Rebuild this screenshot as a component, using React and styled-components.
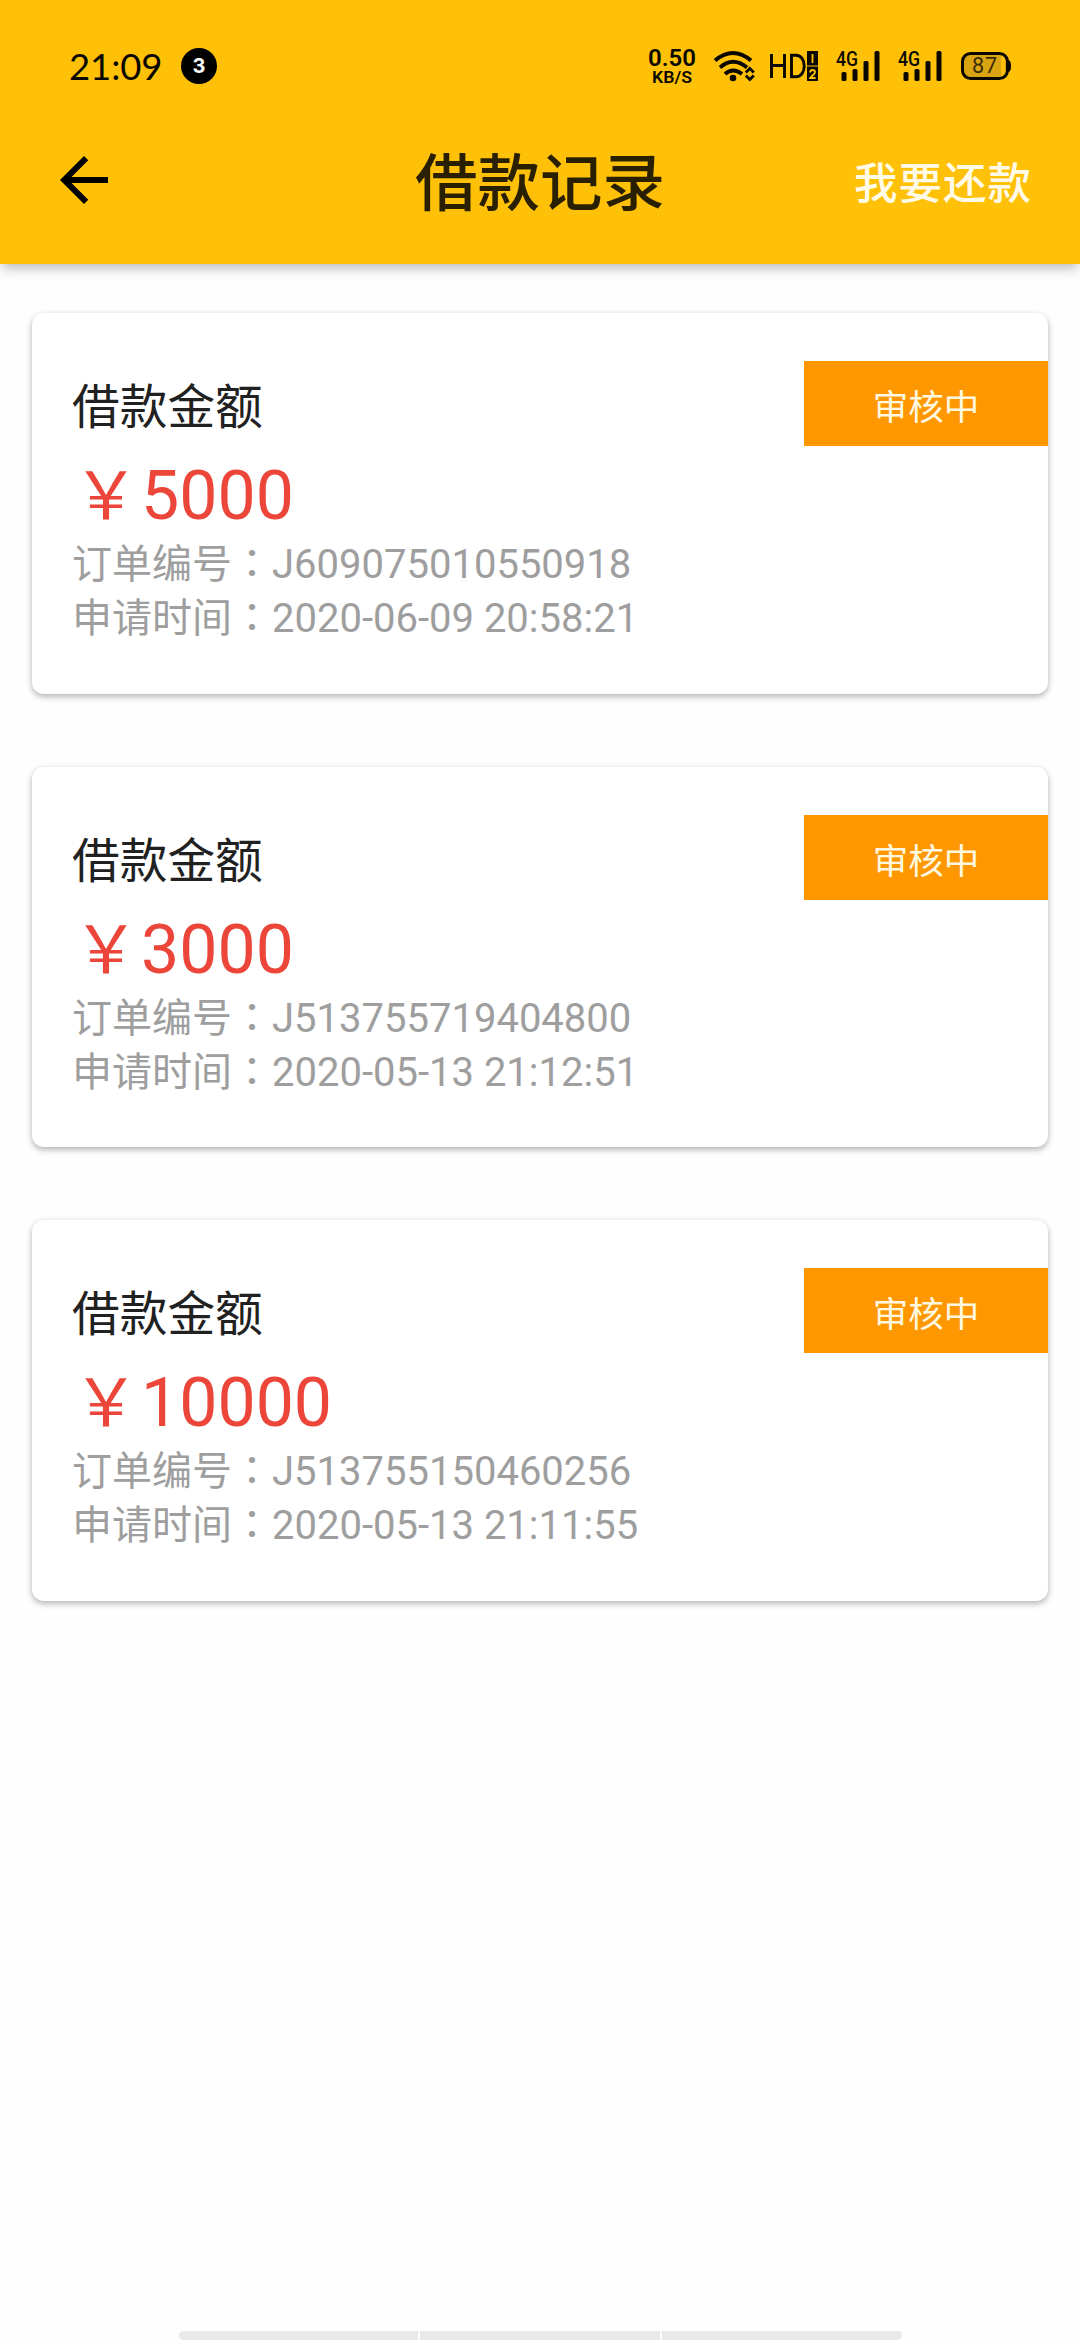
import React from 'react';
import styled, { createGlobalStyle } from 'styled-components';

const GlobalStyle = createGlobalStyle`
  * { box-sizing: border-box; }
  body {
    margin: 0;
    background: #fefefe;
    font-family: Roboto, "Noto Sans CJK SC", sans-serif;
  }
`;

const Screen = styled.div`
  display: flex;
  flex-direction: column;
  width: 1080px;
  height: 2340px;
  overflow: hidden;
`;

const Header = styled.header`
  flex: none;
  height: 264px;
  background: #ffc107;
  box-shadow: 0 6px 12px -2px rgba(0, 0, 0, 0.28);
`;

const StatusBar = styled.div`
  display: flex;
  align-items: center;
  justify-content: space-between;
  height: 96px;
  padding: 36px 68px 0 69px;
`;

const StatusGroup = styled.div`
  display: flex;
  align-items: center;
  height: 60px;
`;

const Clock = styled.span`
  width: 112px;
  font: 400 36.5px/60px Lato, sans-serif;
  letter-spacing: -0.1px;
  color: #0a0800;
`;

const Count = styled.span`
  display: flex;
  align-items: center;
  justify-content: center;
  width: 36px;
  height: 36px;
  border-radius: 50%;
  background: #000;
  color: #fff;
  font: 700 20px/36px Inter, sans-serif;
`;

const StatusIcons = styled.svg`
  display: block;
  width: 370px;
  height: 60px;
`;

const Toolbar = styled.div`
  display: grid;
  grid-template-columns: 1fr auto 1fr;
  align-items: center;
  height: 168px;
  padding: 0 48px;
`;

const Back = styled.svg`
  display: block;
  width: 72px;
  height: 72px;
`;

const Title = styled.h1`
  margin: 9px 0 0;
  font-size: 62.5px;
  font-weight: 500;
  line-height: 90px;
  color: #291f01;
`;

const Action = styled.span`
  justify-self: end;
  margin-top: 10px;
  font-size: 43.5px;
  letter-spacing: 1px;
  font-weight: 500;
  line-height: 60px;
  color: #fffbe6;
`;

const List = styled.main`
  flex: 1;
  display: flex;
  flex-direction: column;
  gap: 73px;
  padding: 49px 32px 0;
`;

const Card = styled.article`
  display: flex;
  justify-content: space-between;
  align-items: flex-start;
  height: 380.5px;
  padding: 48px 0 0 40px;
  border-radius: 12px;
  background: #fff;
  box-shadow: 0 3px 6px rgba(0, 0, 0, 0.24), 0 1px 6px rgba(0, 0, 0, 0.08);
`;

const Details = styled.div`
  display: flex;
  flex-direction: column;
`;

const Label = styled.div`
  margin-top: 11px;
  font-size: 47.7px;
  line-height: 72px;
  color: #212121;
`;

const Amount = styled.div`
  display: flex;
  height: 84px;
  margin-top: 10px;
  font-size: 68px;
  line-height: 84px;
  color: #ec463a;
`;

const Currency = styled.span`
  width: 69px;
  padding-right: 1px;
  font-size: 66px;
  line-height: 86px;
  text-align: center;
`;

const Meta = styled.div`
  font-size: 40px;
  line-height: 54px;
  color: #9e9e9e;
`;

const Colon = styled.span`
  font-family: "Noto Sans CJK TC", sans-serif;
  line-height: 1;
`;

const Badge = styled.span`
  width: 244px;
  height: 85px;
  padding-top: 3px;
  text-align: center;
  font-size: 35.5px;
  line-height: 88px;
  background: #ff9800;
  color: #fff8e0;
`;

const Dock = styled.footer`
  display: flex;
  gap: 2px;
  width: 723px;
  height: 9px;
  margin: 0 auto;
  border-radius: 6px;
  overflow: hidden;
`;

const DockPart = styled.div`
  flex: 1;
  background: #e9e9e9;
`;

const loans = [
  { amount: '5000', order: 'J609075010550918', time: '2020-06-09 20:58:21' },
  { amount: '3000', order: 'J513755719404800', time: '2020-05-13 21:12:51' },
  { amount: '10000', order: 'J513755150460256', time: '2020-05-13 21:11:55' },
];

function Signal({ x }) {
  return (
    <g transform={`translate(${x} 0)`}>
      <text x="0" y="30" fontFamily="Roboto" fontSize="20" fontWeight="500" textLength="22" lengthAdjust="spacingAndGlyphs">4G</text>
      <rect x="5.500" y="36" width="5" height="9" rx="1.500" />
      <rect x="16.500" y="33" width="5" height="12" rx="1.500" />
      <rect x="27.500" y="25" width="5" height="20" rx="1.500" />
      <rect x="38.500" y="15" width="5" height="30" rx="1.500" />
    </g>
  );
}

function DeviceStatus() {
  return (
    <StatusIcons viewBox="0 0 370 60" fill="#0a0800">
      <text x="6" y="30" fontFamily="Roboto" fontSize="23.500" fontWeight="600" textLength="48" lengthAdjust="spacingAndGlyphs">0.50</text>
      <text x="10" y="46.500" fontFamily="Roboto" fontSize="17" fontWeight="600" textLength="40" lengthAdjust="spacingAndGlyphs">KB/S</text>
      <g fill="none" stroke="#0a0800" strokeWidth="4">
        <path d="M73 24.500Q91 9.500 109 24.500" />
        <path d="M78 31.500Q91 20 105 31.500" />
        <path d="M83 38Q91 31 100 38" />
      </g>
      <circle cx="91" cy="42" r="3.300" />
      <path d="M103.800 36.500L107.800 32.500L111.800 36.500M103.800 39.500L107.800 43.500L111.800 39.500" fill="none" stroke="#0a0800" strokeWidth="2.800" />
      <path d="M129.500 18V42M129.500 29.500H142.500M142.500 18V42M149.500 19.300V40.700H154C165 40.700 165 19.300 154 19.300Z" fill="none" stroke="#0a0800" strokeWidth="2.900" />
      <rect x="165" y="15" width="11" height="14.500" />
      <rect x="165" y="30.500" width="11" height="14.500" />
      <path d="M170.500 18V27M168 36.500Q168.500 34 170.500 34Q173 34 173 36.300C173 38 169.500 40 168.300 42H173.500" fill="none" stroke="#ffc107" strokeWidth="1.800" />
      <Signal x={194} />
      <Signal x={256} />
      <rect x="320.500" y="17.500" width="44" height="25" rx="7.500" fill="#d9a411" />
      <rect x="359" y="19" width="4" height="22" fill="#ffc107" />
      <rect x="320.500" y="17.500" width="45" height="25" rx="8" fill="none" stroke="#0a0800" strokeWidth="3" />
      <path d="M366 24Q369 24 369 30Q369 36 366 36Z" />
      <text x="330" y="37" fontFamily="Roboto" fontSize="21.500" textLength="25" fill="#3a2b05">87</text>
    </StatusIcons>
  );
}

function MetaLine({ name, value }) {
  return (
    <Meta>{name}<Colon lang="zh-TW">：</Colon>{value}</Meta>
  );
}

export default function App() {
  return (
    <>
      <GlobalStyle />
      <Screen>
        <Header>
          <StatusBar>
            <StatusGroup>
              <Clock>21:09</Clock>
              <Count>3</Count>
            </StatusGroup>
            <DeviceStatus />
          </StatusBar>
          <Toolbar>
            <Back viewBox="0 0 24 24">
              <path d="M20 11H7.830l5.590-5.590L12 4l-8 8 8 8 1.410-1.410L7.830 13H20v-2z" />
            </Back>
            <Title>借款记录</Title>
            <Action>我要还款</Action>
          </Toolbar>
        </Header>
        <List>
          {loans.map((loan) => (
            <Card key={loan.order}>
              <Details>
                <Label>借款金额</Label>
                <Amount><Currency>￥</Currency>{loan.amount}</Amount>
                <MetaLine name="订单编号" value={loan.order} />
                <MetaLine name="申请时间" value={loan.time} />
              </Details>
              <Badge>审核中</Badge>
            </Card>
          ))}
        </List>
        <Dock>
          <DockPart />
          <DockPart />
          <DockPart />
        </Dock>
      </Screen>
    </>
  );
}
